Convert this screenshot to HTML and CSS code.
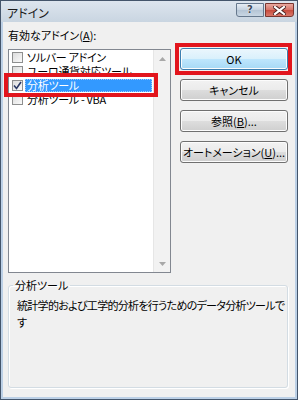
FILE: index.html
```html
<!DOCTYPE html>
<html lang="ja">
	<head>
		<meta charset="UTF-8">
		<title>アドイン</title>
		<link rel="stylesheet" href="styles.css">
	</head>
	<body>
		<div class="window">
			<div class="titlebar">
				<span class="title">アドイン</span>
				<div class="captionButtons">
					<span class="capBtn help">?</span>
					<span class="capBtn close">
						<svg width="13" height="9" viewBox="0 0 13 9">
							<path d="M2 1 L11 8 M11 1 L2 8" stroke="#4a2020" stroke-width="4" stroke-linecap="square"/>
							<path d="M2 1 L11 8 M11 1 L2 8" stroke="#ffffff" stroke-width="2.2" stroke-linecap="square"/>
						</svg>
					</span>
				</div>
			</div>

			<div class="client">
				<div class="main">
					<div class="listColumn">
						<div class="label">有効なアドイン(<u>A</u>):</div>
						<div class="listbox">
							<ul class="items">
								<li class="item"><span class="check"></span><span class="name">ソルバー アドイン</span></li>
								<li class="item"><span class="check"></span><span class="name">ユーロ通貨対応ツール</span></li>
								<li class="item selected">
									<span class="check">
										<svg width="9" height="9" viewBox="0 0 9 9">
											<path d="M1 4.5 L3.5 7.5 L8 1" fill="none" stroke="#2b3a66" stroke-width="1.6"/>
										</svg>
									</span>
									<span class="name">分析ツール</span>
								</li>
								<li class="item"><span class="check"></span><span class="name">分析ツール - VBA</span></li>
							</ul>
							<div class="scrollbar">
								<span class="arrow">
									<svg width="7" height="4" viewBox="0 0 7 4"><path d="M0 4 L3.5 0 L7 4 Z" fill="#a8a8a8"/></svg>
								</span>
								<span class="arrow">
									<svg width="7" height="4" viewBox="0 0 7 4"><path d="M0 0 L3.5 4 L7 0 Z" fill="#a8a8a8"/></svg>
								</span>
							</div>
						</div>
					</div>

					<div class="buttons">
						<button class="btn default">OK</button>
						<button class="btn">キャンセル</button>
						<button class="btn">参照(<u>B</u>)...</button>
						<button class="btn">オートメーション(<u>U</u>)...</button>
					</div>
				</div>

				<fieldset class="description">
					<legend>分析ツール</legend>
					<p>統計学的および工学的分析を行うためのデータ分析ツールです</p>
				</fieldset>
			</div>
		</div>
	</body>
</html>
```

FILE: styles.css
```css
body {
	margin: 0;
	font-family: "Noto Sans CJK JP", sans-serif;
	font-size: 11px;
	font-feature-settings: "palt";
	color: #000;
}
.window {
	width: 298px;
	height: 400px;
	box-sizing: border-box;
	border: 1px solid #44556b;
	background: #bcd0e6;
	display: flex;
	flex-direction: column;
}
.titlebar {
	height: 21px;
	flex: none;
	display: flex;
	justify-content: space-between;
	align-items: flex-start;
	padding: 0 3px 0 6px;
	background: linear-gradient(#dde5ee, #c9d5e1);
}
.title {
	margin-top: 4px;
	font-size: 12px;
	line-height: 16px;
	color: #1a1a1a;
}
.captionButtons {
	display: flex;
	gap: 1px;
	margin-top: 2px;
}
.capBtn {
	width: 28px;
	height: 14px;
	box-sizing: border-box;
	border: 1px solid #66788d;
	display: flex;
	align-items: center;
	justify-content: center;
}
.help {
	border-radius: 0 0 0 3px;
	background: linear-gradient(#e6edf4, #c5d2df 50%, #b4c4d5 51%, #c9d6e3);
	font-family: "DejaVu Sans", sans-serif;
	font-weight: bold;
	font-size: 10px;
	line-height: 10px;
	color: #3b4a5c;
	text-shadow: 0 0 1px #fff, 0 0 1px #fff;
}
.close {
	width: 29px;
	border-color: #7a3630;
	border-radius: 0 0 3px 0;
	background: linear-gradient(#e9a99f, #d77266 50%, #c74a3c 51%, #d9776a);
}
.client {
	flex: 1;
	margin: 0 2px 2px 2px;
	padding: 6px 7px 9px 5px;
	background: #f0f0f0;
	display: flex;
	flex-direction: column;
}
.main {
	display: grid;
	grid-template-columns: 163px 108px;
	column-gap: 9px;
}
.label {
	line-height: 15px;
	margin-bottom: 6px;
}
.listbox {
	height: 224px;
	box-sizing: border-box;
	border: 1px solid #828790;
	background: #fff;
	display: flex;
}
.items {
	flex: 1;
	list-style: none;
	margin: 0;
	padding: 0;
}
.item {
	height: 14px;
	display: flex;
	align-items: center;
	padding-left: 3px;
	white-space: nowrap;
}
.check {
	width: 11px;
	height: 11px;
	box-sizing: border-box;
	border: 1px solid #8e8f8f;
	background: linear-gradient(135deg, #dcdcdc, #fafafa);
	display: flex;
	align-items: center;
	justify-content: center;
	flex: none;
}
.name {
	flex: 1;
	margin-left: 2px;
	margin-right: 1px;
	padding-left: 2px;
	line-height: 14px;
	letter-spacing: -0.3px;
}
.selected {
	outline: 4px solid #e2151d;
	outline-offset: 1px;
	position: relative;
	z-index: 1;
}
.selected .name {
	background: #3399ff;
	color: #fff;
	line-height: 13px;
	outline: 1px dotted #9cc9ff;
	outline-offset: -1px;
}
.scrollbar {
	width: 16px;
	background: #f2f2f2;
	border-left: 1px solid #e6e6e6;
	display: flex;
	flex-direction: column;
	justify-content: space-between;
}
.arrow {
	height: 17px;
	display: flex;
	align-items: center;
	justify-content: center;
}
.buttons {
	padding-top: 20px;
	display: flex;
	flex-direction: column;
	gap: 9px;
}
.btn {
	height: 22px;
	margin: 0;
	padding: 0;
	border: 1px solid #707070;
	border-radius: 3px;
	background: linear-gradient(#f2f2f2, #ebebeb 50%, #dddddd 51%, #cfcfcf);
	box-shadow: inset 0 0 0 1px #fcfcfc;
	font-family: inherit;
	font-size: 11px;
	font-feature-settings: "palt";
	color: #000;
}
.default {
	position: relative;
	border-color: #3c7fb1;
	background: linear-gradient(#eaf6fd, #d9f0fc 50%, #bee6fd 51%, #a7d9f5);
}
/* red marker round the OK button, drawn over the dialog */
.default::after {
	content: "";
	position: absolute;
	top: -6px;
	left: -6px;
	right: -5px;
	bottom: -6px;
	border: 4px solid #e2151d;
}
.description {
	flex: 1;
	margin: 4px 0 0 0;
	padding: 0 1px 0 8px;
	border: 1px solid #d3dce3;
	border-radius: 3px;
	box-shadow: inset 1px 1px #fff, 1px 1px #fff;
}
.description legend {
	margin-left: -4px;
	padding: 0 2px;
	line-height: 16px;
}
.description p {
	margin: 4px 0 0 0;
	line-height: 17px;
	letter-spacing: -0.7px;
}
```
